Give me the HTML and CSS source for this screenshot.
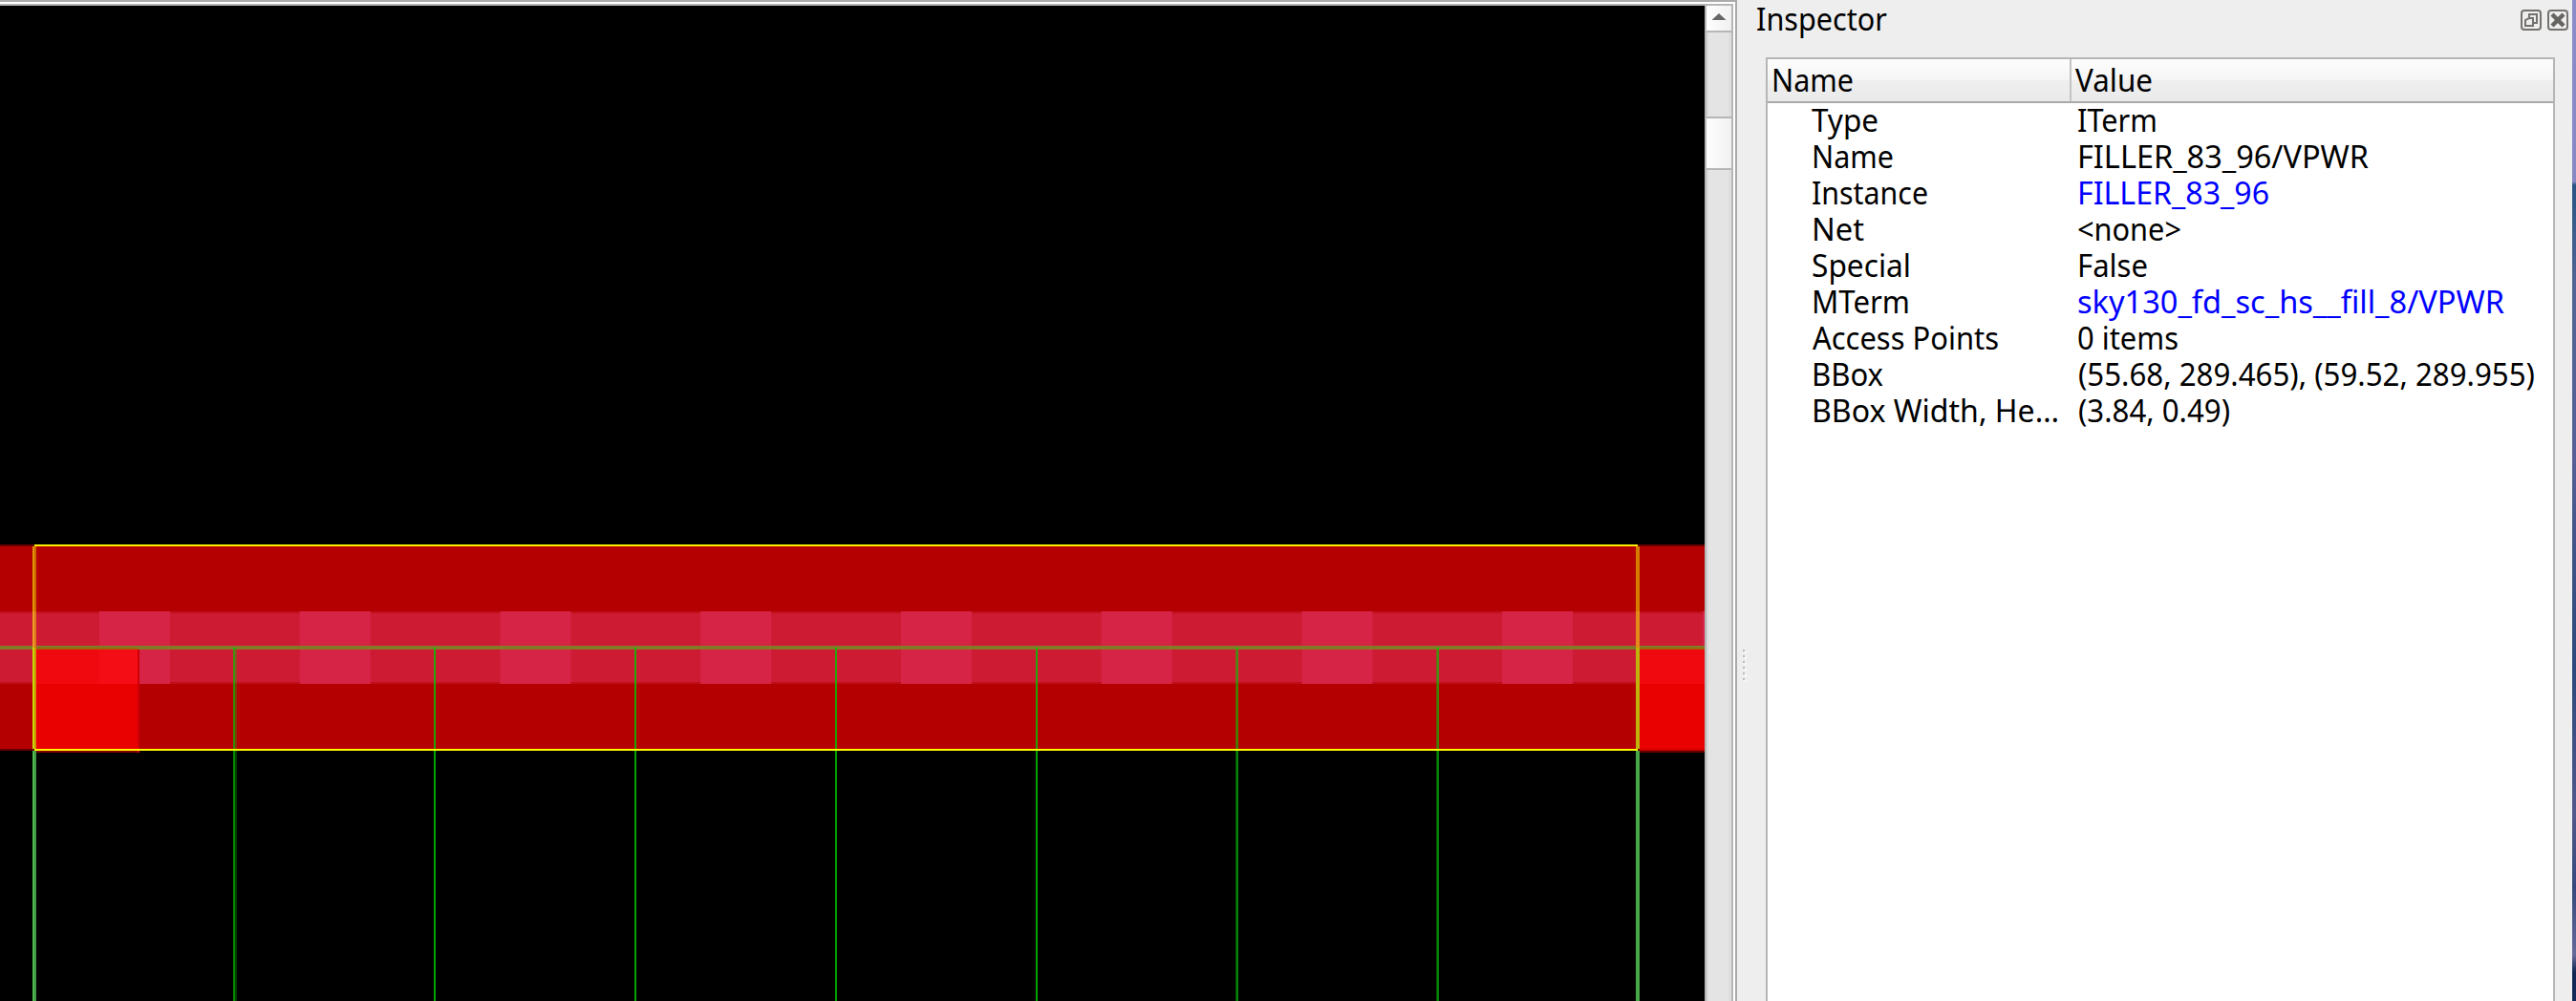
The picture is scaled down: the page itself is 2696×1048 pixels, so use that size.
FILE: index.html
```html
<!DOCTYPE html>
<html lang="en">
<head>
<meta charset="utf-8">
<title>Inspector</title>
<link rel="stylesheet" href="styles.css">
</head>
<body>
<div class="window">
  <main class="viewer">
    <svg class="layout" width="1784" height="1042" viewBox="0 6 1784 1042" shape-rendering="crispEdges">
      <defs>
        <pattern id="vias" x="104" y="640" width="209.75" height="76" patternUnits="userSpaceOnUse">
          <rect width="73.5" height="76" fill="#d62446"/>
        </pattern>
      </defs>
      <rect y="6" width="1784" height="1042" fill="#000"/>
      <rect y="570" width="1784" height="216" fill="#640000"/>
      <rect y="572" width="1784" height="212" fill="#b40000"/>
      <rect y="640" width="1784" height="76" fill="#c00e1b"/>
      <rect y="642" width="1784" height="72" fill="#cd1b34"/>
      <rect x="104" y="640" width="1680" height="76" fill="url(#vias)"/>
      <rect x="38" y="678" width="106" height="108" fill="#e90000"/>
      <rect x="144" y="678" width="2" height="110" fill="#d00008"/>
      <rect x="38" y="678" width="106" height="38" fill="#f00a10"/>
      <rect x="104" y="678" width="40" height="38" fill="#f50d16"/>
      <rect x="38" y="786" width="106" height="2" fill="#820000"/>
      <rect x="1716" y="678" width="68" height="108" fill="#e90000"/>
      <rect x="1716" y="678" width="68" height="38" fill="#f00a10"/>
      <rect x="1716" y="784" width="68" height="2" fill="#cc0000"/>
      <rect x="1716" y="786" width="68" height="2" fill="#640000"/>
      <rect y="676" width="1784" height="4" fill="#837926"/>
      <rect x="38" y="678" width="106" height="2" fill="#98680e"/>
      <rect x="1716" y="678" width="68" height="2" fill="#98680e"/>
      <g fill="#00c800">
        <path d="M454 678h2v370h-2zM664 678h2v370h-2zM874 678h2v370h-2zM1084 678h2v370h-2z" fill-opacity=".82"/>
        <path d="M244 678h2v370h-2z" fill-opacity=".7"/>
        <path d="M246 678h2v370h-2z" fill-opacity=".3"/>
        <path d="M1293 678h1v370h-1zM1503 678h1v370h-1z" fill-opacity=".4"/>
        <path d="M1294 678h2v370h-2zM1504 678h2v370h-2z" fill-opacity=".65"/>
      </g>
      <rect x="34" y="786" width="2" height="262" fill="#4cbb4c"/>
      <rect x="36" y="786" width="2" height="262" fill="#439643"/>
      <rect x="1712" y="786" width="4" height="262" fill="#48a848"/>
      <rect x="34" y="572" width="2" height="106" fill="#dc9600"/>
      <rect x="36" y="572" width="2" height="106" fill="#d06400"/>
      <rect x="34" y="640" width="2" height="38" fill="#e6a01e"/>
      <rect x="36" y="640" width="2" height="38" fill="#dc7420"/>
      <rect x="34" y="678" width="2" height="106" fill="#c8dc00"/>
      <rect x="36" y="678" width="2" height="106" fill="#d09000"/>
      <rect x="1712" y="572" width="4" height="68" fill="#d47d00"/>
      <rect x="1712" y="640" width="4" height="38" fill="#e38b18"/>
      <rect x="1712" y="678" width="4" height="106" fill="#beb40c"/>
      <rect x="36" y="570" width="1678" height="2" fill="#fff000"/>
      <rect x="36" y="784" width="1678" height="2" fill="#fffa00"/>
    </svg>
    <div class="scrollbar">
      <div class="step"><svg width="16" height="8" viewBox="0 0 16 8" fill="#666"><path d="M8 0 15.500 7H.5z"/></svg></div>
      <div class="groove"></div>
      <div class="thumb"></div>
    </div>
  </main>
  <div class="splitter"><i></i><i></i><i></i><i></i><i></i><i></i></div>
  <aside class="dock">
    <header class="titlebar">
      <svg class="t" width="140" height="40"><text x="1" y="32" textLength="137" lengthAdjust="spacingAndGlyphs">Inspector</text></svg>
      <div class="buttons">
        <svg width="22" height="22" viewBox="0 0 22 22" fill="none" stroke="#74726e" stroke-width="2"><rect x="1" y="1" width="20" height="20" rx="3"/><path d="M9 8V5h8v9h-3M9 9h4v8H5v-6l4-2z"/></svg>
        <svg width="22" height="22" viewBox="0 0 22 22" fill="none" stroke="#74726e" stroke-width="2"><rect x="1" y="1" width="20" height="20" rx="3"/><path d="m5 5 12 12M17 5 5 17" stroke="#666461" stroke-width="4.500"/></svg>
      </div>
    </header>
    <section class="tree">
      <div class="head">
        <div class="cell name"><svg class="t" width="120" height="38"><text x="1" y="30" textLength="86" lengthAdjust="spacingAndGlyphs">Name</text></svg></div>
        <div class="cell value"><svg class="t" width="120" height="38"><text x="0" y="30" textLength="81" lengthAdjust="spacingAndGlyphs">Value</text></svg></div>
      </div>
      <div class="rows">
        <svg class="t" width="276" height="38"><text x="1" y="30" textLength="70" lengthAdjust="spacingAndGlyphs">Type</text></svg>
        <svg class="t" width="490" height="38"><text x="1" y="30" textLength="84" lengthAdjust="spacingAndGlyphs">ITerm</text></svg>
        <svg class="t" width="276" height="38"><text x="1" y="30" textLength="86" lengthAdjust="spacingAndGlyphs">Name</text></svg>
        <svg class="t" width="490" height="38"><text x="1" y="30" textLength="305" lengthAdjust="spacingAndGlyphs">FILLER_83_96/VPWR</text></svg>
        <svg class="t" width="276" height="38"><text x="1" y="30" textLength="122" lengthAdjust="spacingAndGlyphs">Instance</text></svg>
        <svg class="t link" width="490" height="38"><text x="1" y="30" textLength="201" lengthAdjust="spacingAndGlyphs">FILLER_83_96</text></svg>
        <svg class="t" width="276" height="38"><text x="1" y="30" textLength="55" lengthAdjust="spacingAndGlyphs">Net</text></svg>
        <svg class="t" width="490" height="38"><text x="1" y="30" textLength="109" lengthAdjust="spacingAndGlyphs">&lt;none&gt;</text></svg>
        <svg class="t" width="276" height="38"><text x="1" y="30" textLength="104" lengthAdjust="spacingAndGlyphs">Special</text></svg>
        <svg class="t" width="490" height="38"><text x="1" y="30" textLength="74" lengthAdjust="spacingAndGlyphs">False</text></svg>
        <svg class="t" width="276" height="38"><text x="1" y="30" textLength="103" lengthAdjust="spacingAndGlyphs">MTerm</text></svg>
        <svg class="t link" width="490" height="38"><text x="1" y="30" textLength="447" lengthAdjust="spacingAndGlyphs">sky130_fd_sc_hs__fill_8/VPWR</text></svg>
        <svg class="t" width="276" height="38"><text x="2" y="30" textLength="195" lengthAdjust="spacingAndGlyphs">Access Points</text></svg>
        <svg class="t" width="490" height="38"><text x="1" y="30" textLength="106" lengthAdjust="spacingAndGlyphs">0 items</text></svg>
        <svg class="t" width="276" height="38"><text x="1" y="30" textLength="75" lengthAdjust="spacingAndGlyphs">BBox</text></svg>
        <svg class="t" width="490" height="38"><text x="2" y="30" textLength="478" lengthAdjust="spacingAndGlyphs">(55.68, 289.465), (59.52, 289.955)</text></svg>
        <svg class="t" width="276" height="38"><text x="1" y="30" textLength="259" lengthAdjust="spacingAndGlyphs">BBox Width, He…</text></svg>
        <svg class="t" width="490" height="38"><text x="2" y="30" textLength="159" lengthAdjust="spacingAndGlyphs">(3.84, 0.49)</text></svg>
      </div>
    </section>
  </aside>
  <div class="desktop"></div>
</div>
</body>
</html>
```
FILE: styles.css
```css
* { box-sizing: border-box; }
body { margin: 0; overflow: hidden; background: #eee; }
svg { display: block; }
.window { display: flex; width: 2696px; height: 1048px; background: #eee; }

.viewer {
  display: flex;
  width: 1818px;
  padding-top: 2px;
  border-top: 2px solid #aaa;
  border-right: 2px solid #aaa;
  background: #fff;
}
.layout { flex: none; border-top: 2px solid #b4b4b4; box-sizing: content-box; }
.scrollbar {
  display: flex;
  flex-direction: column;
  width: 30px;
  height: 1044px;
  border: 2px solid #b6b6b6;
  border-bottom: 0;
  background: linear-gradient(90deg, #d9d9d9 0 2px, #e4e4e4 2px 22px, #dedede 24px);
}
.step, .thumb { background: linear-gradient(90deg, #fff, #f0f0f0); }
.step { display: flex; align-items: center; justify-content: center; height: 28px; padding-bottom: 2px; padding-right: 1px; border-bottom: 2px solid #b6b6b6; }
.groove { height: 88px; }
.thumb { height: 56px; border: solid #b6b6b6; border-width: 2px 0; }

.splitter { display: flex; flex-direction: column; gap: 4px; width: 22px; padding: 680px 0 0 6px; }
.splitter i { width: 2px; height: 2px; background: #bbb; box-shadow: 2px 2px 0 #fafafa; }

.dock { display: flex; flex-direction: column; width: 852px; padding-right: 4px; }
.titlebar { display: flex; justify-content: space-between; height: 60px; }
.titlebar .t { margin-left: -3px; }
.buttons { display: flex; gap: 6px; padding-top: 10px; }
.tree { flex: 1; width: 826px; margin-left: 8px; border: 2px solid #b6b6b6; border-bottom: 0; background: #fff; }
.head { display: flex; height: 46px; border-bottom: 2px solid #aaa; background: linear-gradient(#fdfdfd, #f5f5f5 50%, #efefef 51%, #eaeaea); }
.cell { padding-top: 4px; }
.cell.name { width: 318px; padding-left: 3px; border-right: 2px solid #c4c4c4; }
.cell.value { padding-left: 4px; }
.rows { display: grid; grid-template-columns: 278px 490px; grid-auto-rows: 38px; padding-left: 45px; }

.t { overflow: visible; font: 33.5px "Noto Sans", sans-serif; fill: #000; }
.link { fill: #00f; }

.desktop { width: 4px; background: linear-gradient(#8b8dca 0, #8688c4 190px, #285684 194px, #536596 300px, #555f96 480px, #3f5386 580px, #2c487c 700px, #51588c 850px, #35487c 930px, #66699b 1000px, #102552 1018px, #14295a 1048px); }
```
